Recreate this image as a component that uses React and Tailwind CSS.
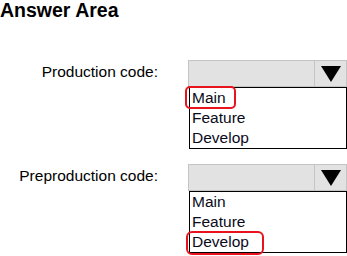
import React from "react";

function Dropdown({ highlight }) {
  const items = ["Main", "Feature", "Develop"];
  return (
    <div className="w-[159px]">
      <div className="flex h-[27px] border border-[#c4c4c4] bg-[#e2e2e2]">
        <div className="flex-1" />
        <div className="flex w-[32px] items-center justify-center border-l border-[#c4c4c4]">
          <svg width="20" height="16" viewBox="0 0 20 16">
            <polygon points="0,0 20,0 10,16" fill="#000" />
          </svg>
        </div>
      </div>
      <div className="ml-[1px] flex h-[62px] flex-col border border-black bg-white pl-[2px]">
        {items.map((it) => (
          <div key={it} className="relative text-[15.5px] leading-[20px] text-[#0a0a1a]">
            {it === highlight && (
              <span
                className={
                  it === "Main"
                    ? "absolute left-[-7px] top-[-2px] h-[23px] w-[51px] rounded-[5px] border-[2.5px] border-[#e8131c]"
                    : "absolute left-[-6px] top-[-1px] h-[24px] w-[78px] rounded-[6px] border-[2.5px] border-[#e8131c]"
                }
              />
            )}
            <span className="relative">{it}</span>
          </div>
        ))}
      </div>
    </div>
  );
}

function Row({ label, highlight, className }) {
  return (
    <div className={"flex items-start " + className}>
      <div className="w-[158px] pt-[2px] text-right text-[15.5px] leading-[20px] text-black">
        {label}
      </div>
      <div className="ml-[30px]">
        <Dropdown highlight={highlight} />
      </div>
    </div>
  );
}

export default function App() {
  return (
    <div className="h-[256px] w-[347px] overflow-hidden bg-white font-['Liberation_Sans',Arial,sans-serif]">
      <div className="text-[19.5px] font-bold leading-[20px] text-black">Answer Area</div>
      <Row label="Production code:" highlight="Main" className="mt-[40px]" />
      <Row label="Preproduction code:" highlight="Develop" className="mt-[15px]" />
    </div>
  );
}
